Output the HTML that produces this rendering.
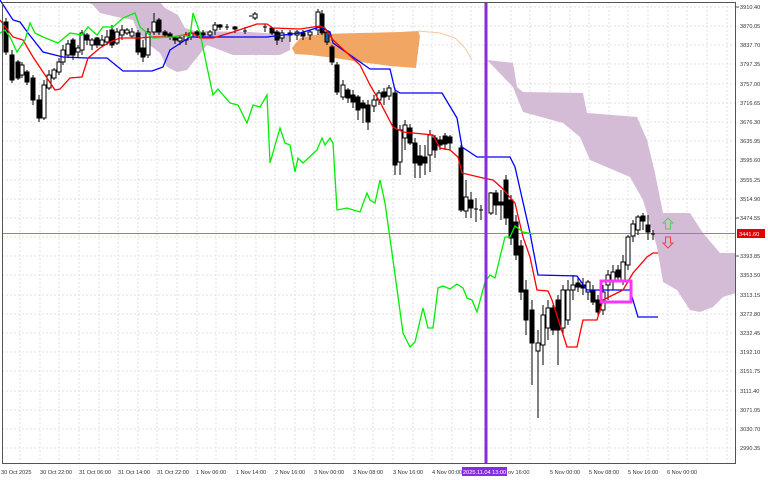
<!DOCTYPE html>
<html><head><meta charset="utf-8"><style>
html,body{margin:0;padding:0;background:#fff;width:768px;height:480px;overflow:hidden}
svg{display:block}
text{font-family:"Liberation Sans",sans-serif;font-size:5.6px;fill:#333}
</style></head><body>
<svg width="768" height="480" viewBox="0 0 768 480" xmlns="http://www.w3.org/2000/svg">
<rect width="768" height="480" fill="#fff"/>
<!-- grid -->
<g stroke="#e2e2e2" stroke-width="1" stroke-dasharray="2,2">
<line x1="2" x2="736" y1="7" y2="7"/><line x1="2" x2="736" y1="26" y2="26"/><line x1="2" x2="736" y1="45" y2="45"/><line x1="2" x2="736" y1="64" y2="64"/><line x1="2" x2="736" y1="84" y2="84"/><line x1="2" x2="736" y1="103" y2="103"/><line x1="2" x2="736" y1="122" y2="122"/><line x1="2" x2="736" y1="141" y2="141"/><line x1="2" x2="736" y1="160" y2="160"/><line x1="2" x2="736" y1="180" y2="180"/><line x1="2" x2="736" y1="199" y2="199"/><line x1="2" x2="736" y1="218" y2="218"/><line x1="2" x2="736" y1="237" y2="237"/><line x1="2" x2="736" y1="256" y2="256"/><line x1="2" x2="736" y1="275" y2="275"/><line x1="2" x2="736" y1="295" y2="295"/><line x1="2" x2="736" y1="314" y2="314"/><line x1="2" x2="736" y1="333" y2="333"/><line x1="2" x2="736" y1="352" y2="352"/><line x1="2" x2="736" y1="371" y2="371"/><line x1="2" x2="736" y1="391" y2="391"/><line x1="2" x2="736" y1="410" y2="410"/><line x1="2" x2="736" y1="429" y2="429"/><line x1="2" x2="736" y1="448" y2="448"/>
<line y1="2" y2="463" x1="20" x2="20"/><line y1="2" y2="463" x1="40" x2="40"/><line y1="2" y2="463" x1="59" x2="59"/><line y1="2" y2="463" x1="79" x2="79"/><line y1="2" y2="463" x1="99" x2="99"/><line y1="2" y2="463" x1="118" x2="118"/><line y1="2" y2="463" x1="138" x2="138"/><line y1="2" y2="463" x1="157" x2="157"/><line y1="2" y2="463" x1="177" x2="177"/><line y1="2" y2="463" x1="197" x2="197"/><line y1="2" y2="463" x1="216" x2="216"/><line y1="2" y2="463" x1="236" x2="236"/><line y1="2" y2="463" x1="256" x2="256"/><line y1="2" y2="463" x1="275" x2="275"/><line y1="2" y2="463" x1="295" x2="295"/><line y1="2" y2="463" x1="314" x2="314"/><line y1="2" y2="463" x1="334" x2="334"/><line y1="2" y2="463" x1="354" x2="354"/><line y1="2" y2="463" x1="373" x2="373"/><line y1="2" y2="463" x1="393" x2="393"/><line y1="2" y2="463" x1="413" x2="413"/><line y1="2" y2="463" x1="432" x2="432"/><line y1="2" y2="463" x1="452" x2="452"/><line y1="2" y2="463" x1="471" x2="471"/><line y1="2" y2="463" x1="511" x2="511"/><line y1="2" y2="463" x1="530" x2="530"/><line y1="2" y2="463" x1="550" x2="550"/><line y1="2" y2="463" x1="570" x2="570"/><line y1="2" y2="463" x1="589" x2="589"/><line y1="2" y2="463" x1="609" x2="609"/><line y1="2" y2="463" x1="628" x2="628"/><line y1="2" y2="463" x1="648" x2="648"/><line y1="2" y2="463" x1="668" x2="668"/><line y1="2" y2="463" x1="687" x2="687"/><line y1="2" y2="463" x1="707" x2="707"/><line y1="2" y2="463" x1="727" x2="727"/>
</g>
<!-- clouds -->
<polygon fill="#d5bcd6" points="87,2 160,2 165,8 178,15 185,28 195,31 250,32 290,35 290,50 280,55 233,55 207,45 187,70 177,72 167,67 160,53 147,43 137,30 133,20 117,17 100,13 93,5"/>
<polygon fill="#f2a664" points="292,48 300,38 320,34 360,33 400,32 418,31 420,36 416,68 390,66 360,62 335,58 310,55 295,54"/>
<polyline fill="none" stroke="#f6c89e" stroke-width="1" points="418,31 440,33 455,38 465,48 472,60"/>
<polygon fill="#d5bcd6" points="487,60 513,63 517,87 523,92 583,93 587,113 637,117 647,140 655,173 663,213 690,213 703,233 720,253 736,253 736,293 723,297 713,307 700,312 690,310 677,290 663,282 657,247 643,200 630,177 590,160 580,137 563,123 523,112 513,87 490,63"/>
<!-- price line -->
<line x1="2" x2="736" y1="233.5" y2="233.5" stroke="#d66" stroke-width="1"/>
<!-- candles -->
<g stroke="#000" stroke-width="1">
<line x1="6" x2="6" y1="18" y2="55"/><rect x="4" y="22" width="4" height="30" fill="#000"/>
<line x1="12" x2="12" y1="50" y2="83"/><rect x="10" y="55" width="4" height="25" fill="#000"/>
<line x1="18" x2="18" y1="60" y2="80"/><rect x="16" y="62" width="4" height="16" fill="#000"/>
<line x1="22" x2="22" y1="62" y2="78"/><rect x="20" y="65" width="4" height="10" fill="#fff"/>
<line x1="27" x2="27" y1="70" y2="85"/><rect x="25" y="72" width="4" height="10" fill="#000"/>
<line x1="33" x2="33" y1="75" y2="105"/><rect x="31" y="78" width="4" height="22" fill="#000"/>
<line x1="39" x2="39" y1="95" y2="122"/><rect x="37" y="100" width="4" height="18" fill="#000"/>
<line x1="44" x2="44" y1="80" y2="120"/><rect x="42" y="85" width="4" height="33" fill="#fff"/>
<line x1="49" x2="49" y1="70" y2="90"/><rect x="47" y="75" width="4" height="13" fill="#fff"/>
<line x1="54" x2="54" y1="68" y2="80"/><rect x="52" y="70" width="4" height="8" fill="#fff"/>
<line x1="59" x2="59" y1="58" y2="75"/><rect x="57" y="62" width="4" height="10" fill="#fff"/>
<line x1="63" x2="63" y1="45" y2="65"/><rect x="61" y="50" width="4" height="12" fill="#fff"/>
<line x1="68" x2="68" y1="40" y2="58"/><rect x="66" y="44" width="4" height="11" fill="#fff"/>
<line x1="73" x2="73" y1="38" y2="60"/><rect x="71" y="40" width="4" height="15" fill="#000"/>
<line x1="78" x2="78" y1="45" y2="58"/><rect x="76" y="48" width="4" height="4" fill="#fff"/>
<line x1="82" x2="82" y1="30" y2="55"/><rect x="80" y="33" width="4" height="17" fill="#fff"/>
<line x1="87" x2="87" y1="33" y2="45"/><rect x="85" y="35" width="4" height="5" fill="#000"/>
<line x1="92" x2="92" y1="38" y2="50"/><rect x="90" y="40" width="4" height="5" fill="#fff"/>
<line x1="97" x2="97" y1="37" y2="48"/><rect x="95" y="38" width="4" height="7" fill="#000"/>
<line x1="102" x2="102" y1="35" y2="47"/><rect x="100" y="40" width="4" height="5" fill="#fff"/>
<line x1="107" x2="107" y1="30" y2="45"/><rect x="105" y="37" width="4" height="5" fill="#fff"/>
<line x1="112" x2="112" y1="25" y2="48"/><rect x="110" y="30" width="4" height="15" fill="#000"/>
<line x1="117" x2="117" y1="28" y2="45"/><rect x="115" y="32" width="4" height="11" fill="#fff"/>
<line x1="122" x2="122" y1="25" y2="40"/><rect x="120" y="30" width="4" height="5" fill="#fff"/>
<line x1="127" x2="127" y1="28" y2="35"/><rect x="125" y="30" width="4" height="3" fill="#fff"/>
<line x1="132" x2="132" y1="28" y2="38"/><rect x="130" y="32" width="4" height="4" fill="#fff"/>
<line x1="138" x2="138" y1="30" y2="55"/><rect x="136" y="33" width="4" height="19" fill="#000"/>
<line x1="143" x2="143" y1="40" y2="62"/><rect x="141" y="48" width="4" height="9" fill="#000"/>
<line x1="148" x2="148" y1="28" y2="58"/><rect x="146" y="32" width="4" height="23" fill="#fff"/>
<line x1="154" x2="154" y1="13" y2="35"/><rect x="152" y="22" width="4" height="10" fill="#fff"/>
<line x1="159" x2="159" y1="18" y2="35"/><rect x="157" y="20" width="4" height="12" fill="#000"/>
<line x1="165" x2="165" y1="30" y2="38"/><rect x="163" y="32" width="4" height="3" fill="#000"/>
<line x1="170" x2="170" y1="32" y2="40"/><rect x="168" y="34" width="4" height="2" fill="#000"/>
<line x1="175" x2="175" y1="36" y2="44"/><rect x="173" y="38" width="4" height="2" fill="#000"/>
<line x1="180" x2="180" y1="35" y2="45"/><rect x="178" y="38" width="4" height="3" fill="#fff"/>
<line x1="186" x2="186" y1="32" y2="45"/><rect x="184" y="36" width="4" height="4" fill="#fff"/>
<line x1="191" x2="191" y1="30" y2="40"/><rect x="189" y="33" width="4" height="4" fill="#fff"/>
<line x1="197" x2="197" y1="30" y2="38"/><rect x="195" y="32" width="4" height="3" fill="#000"/>
<line x1="203" x2="203" y1="30" y2="38"/><rect x="201" y="33" width="4" height="2" fill="#000"/>
<line x1="210" x2="210" y1="30" y2="38"/><rect x="208" y="32" width="4" height="3" fill="#fff"/>
<line x1="215" x2="215" y1="22" y2="35"/><rect x="213" y="25" width="4" height="5" fill="#fff"/>
<line x1="220" x2="220" y1="24" y2="30"/><rect x="218" y="25" width="4" height="2" fill="#000"/>
<line x1="227" x2="227" y1="24" y2="30"/><line x1="225" x2="229" y1="27" y2="27"/>
<line x1="235" x2="235" y1="26" y2="33"/><rect x="233" y="27" width="4" height="2" fill="#000"/>
<line x1="245" x2="245" y1="27" y2="34"/><line x1="243" x2="247" y1="31" y2="31"/>
<line x1="255" x2="255" y1="12" y2="20"/><rect x="253" y="14" width="4" height="4" fill="#fff"/><line x1="249" x2="252" y1="16" y2="16"/>
<line x1="265" x2="265" y1="24" y2="32"/><line x1="263" x2="267" y1="27" y2="27"/>
<line x1="272" x2="272" y1="27" y2="35"/><rect x="270" y="28" width="4" height="5" fill="#000"/>
<line x1="277" x2="277" y1="30" y2="45"/><rect x="275" y="32" width="4" height="8" fill="#000"/>
<line x1="282" x2="282" y1="30" y2="42"/><rect x="280" y="33" width="4" height="5" fill="#fff"/>
<line x1="290" x2="290" y1="30" y2="42"/><rect x="288" y="33" width="4" height="2" fill="#000"/>
<line x1="297" x2="297" y1="30" y2="40"/><rect x="295" y="32" width="4" height="3" fill="#fff"/>
<line x1="303" x2="303" y1="30" y2="40"/><rect x="301" y="33" width="4" height="3" fill="#000"/>
<line x1="310" x2="310" y1="30" y2="40"/><rect x="308" y="32" width="4" height="3" fill="#fff"/>
<line x1="318" x2="318" y1="9" y2="35"/><rect x="316" y="12" width="4" height="18" fill="#fff"/>
<line x1="322" x2="322" y1="10" y2="35"/><rect x="320" y="14" width="4" height="19" fill="#000"/>
<line x1="327" x2="327" y1="30" y2="45"/><rect x="325" y="32" width="4" height="10" fill="#1a5a9a"/>
<line x1="332" x2="332" y1="45" y2="65"/><rect x="330" y="47" width="4" height="15" fill="#000"/>
<line x1="337" x2="337" y1="62" y2="95"/><rect x="335" y="65" width="4" height="27" fill="#000"/>
<line x1="343" x2="343" y1="80" y2="100"/><rect x="341" y="85" width="4" height="12" fill="#fff"/>
<line x1="348" x2="348" y1="88" y2="103"/><rect x="346" y="90" width="4" height="8" fill="#000"/>
<line x1="353" x2="353" y1="90" y2="108"/><rect x="351" y="95" width="4" height="7" fill="#000"/>
<line x1="358" x2="358" y1="95" y2="120"/><rect x="356" y="97" width="4" height="13" fill="#000"/>
<line x1="363" x2="363" y1="100" y2="123"/><rect x="361" y="103" width="4" height="5" fill="#000"/>
<line x1="368" x2="368" y1="100" y2="130"/><rect x="366" y="105" width="4" height="17" fill="#000"/>
<line x1="374" x2="374" y1="95" y2="112"/><rect x="372" y="100" width="4" height="6" fill="#fff"/>
<line x1="379" x2="379" y1="90" y2="105"/><rect x="377" y="93" width="4" height="7" fill="#fff"/>
<line x1="384" x2="384" y1="88" y2="105"/><rect x="382" y="92" width="4" height="5" fill="#000"/>
<line x1="389" x2="389" y1="85" y2="100"/><rect x="387" y="88" width="4" height="8" fill="#fff"/>
<line x1="395" x2="395" y1="88" y2="175"/><rect x="393" y="93" width="4" height="72" fill="#000"/>
<line x1="400" x2="400" y1="125" y2="175"/><rect x="398" y="130" width="4" height="32" fill="#fff"/>
<line x1="405" x2="405" y1="120" y2="150"/><rect x="403" y="125" width="4" height="13" fill="#fff"/>
<line x1="410" x2="410" y1="124" y2="145"/><rect x="408" y="128" width="4" height="15" fill="#000"/>
<line x1="415" x2="415" y1="138" y2="178"/><rect x="413" y="143" width="4" height="20" fill="#000"/>
<line x1="420" x2="420" y1="145" y2="178"/><rect x="418" y="156" width="4" height="9" fill="#000"/>
<line x1="425" x2="425" y1="145" y2="175"/><rect x="423" y="157" width="4" height="6" fill="#000"/>
<line x1="430" x2="430" y1="130" y2="172"/><rect x="428" y="135" width="4" height="20" fill="#fff"/>
<line x1="435" x2="435" y1="135" y2="158"/><rect x="433" y="138" width="4" height="12" fill="#000"/>
<line x1="440" x2="440" y1="136" y2="150"/><rect x="438" y="140" width="4" height="5" fill="#000"/>
<line x1="445" x2="445" y1="133" y2="150"/><rect x="443" y="136" width="4" height="8" fill="#000"/>
<line x1="450" x2="450" y1="135" y2="150"/><rect x="448" y="137" width="4" height="6" fill="#000"/>
<line x1="461" x2="461" y1="145" y2="212"/><rect x="459" y="148" width="4" height="62" fill="#000"/>
<line x1="466" x2="466" y1="180" y2="218"/><rect x="464" y="197" width="4" height="14" fill="#fff"/>
<line x1="471" x2="471" y1="192" y2="218"/><rect x="469" y="200" width="4" height="8" fill="#000"/>
<line x1="476" x2="476" y1="198" y2="222"/><line x1="474" x2="478" y1="209" y2="209"/>
<line x1="481" x2="481" y1="205" y2="220"/><line x1="479" x2="483" y1="210" y2="210"/>
<line x1="491" x2="491" y1="192" y2="215"/><rect x="489" y="193" width="4" height="20" fill="#fff"/>
<line x1="496" x2="496" y1="190" y2="215"/><rect x="494" y="193" width="4" height="12" fill="#000"/>
<line x1="501" x2="501" y1="190" y2="220"/><rect x="499" y="202" width="4" height="3" fill="#000"/>
<line x1="506" x2="506" y1="175" y2="225"/><rect x="504" y="180" width="4" height="38" fill="#000"/>
<line x1="511" x2="511" y1="195" y2="245"/><rect x="509" y="200" width="4" height="38" fill="#000"/>
<line x1="516" x2="516" y1="215" y2="260"/><rect x="514" y="222" width="4" height="33" fill="#000"/>
<line x1="521" x2="521" y1="240" y2="300"/><rect x="519" y="246" width="4" height="46" fill="#000"/>
<line x1="526" x2="526" y1="280" y2="335"/><rect x="524" y="290" width="4" height="30" fill="#000"/>
<line x1="532" x2="532" y1="300" y2="385"/><rect x="530" y="310" width="4" height="33" fill="#000"/>
<line x1="538" x2="538" y1="330" y2="418"/><rect x="536" y="343" width="4" height="8" fill="#fff"/>
<line x1="543" x2="543" y1="305" y2="365"/><rect x="541" y="315" width="4" height="30" fill="#fff"/>
<line x1="548" x2="548" y1="300" y2="340"/><rect x="546" y="308" width="4" height="20" fill="#fff"/>
<line x1="553" x2="553" y1="305" y2="335"/><rect x="551" y="308" width="4" height="22" fill="#000"/>
<line x1="558" x2="558" y1="295" y2="365"/><rect x="556" y="300" width="4" height="30" fill="#000"/>
<line x1="563" x2="563" y1="285" y2="335"/><rect x="561" y="290" width="4" height="38" fill="#fff"/>
<line x1="568" x2="568" y1="280" y2="325"/><rect x="566" y="290" width="4" height="30" fill="#fff"/>
<line x1="573" x2="573" y1="275" y2="300"/><rect x="571" y="285" width="4" height="5" fill="#fff"/>
<line x1="578" x2="578" y1="278" y2="292"/><rect x="576" y="283" width="4" height="4" fill="#000"/>
<line x1="583" x2="583" y1="278" y2="295"/><rect x="581" y="285" width="4" height="3" fill="#000"/>
<line x1="588" x2="588" y1="280" y2="300"/><rect x="586" y="282" width="4" height="10" fill="#fff"/>
<line x1="593" x2="593" y1="285" y2="305"/><rect x="591" y="290" width="4" height="12" fill="#000"/>
<line x1="598" x2="598" y1="295" y2="315"/><rect x="596" y="300" width="4" height="12" fill="#000"/>
<line x1="603" x2="603" y1="285" y2="315"/><rect x="601" y="292" width="4" height="18" fill="#fff"/>
<line x1="608" x2="608" y1="270" y2="300"/><rect x="606" y="275" width="4" height="10" fill="#fff"/>
<line x1="613" x2="613" y1="265" y2="290"/><rect x="611" y="272" width="4" height="8" fill="#fff"/>
<line x1="618" x2="618" y1="265" y2="282"/><rect x="616" y="270" width="4" height="7" fill="#000"/>
<line x1="623" x2="623" y1="255" y2="285"/><rect x="621" y="262" width="4" height="18" fill="#fff"/>
<line x1="628" x2="628" y1="235" y2="270"/><rect x="626" y="237" width="4" height="28" fill="#fff"/>
<line x1="633" x2="633" y1="220" y2="242"/><rect x="631" y="224" width="4" height="12" fill="#fff"/>
<line x1="638" x2="638" y1="215" y2="235"/><rect x="636" y="217" width="4" height="13" fill="#fff"/>
<line x1="643" x2="643" y1="213" y2="230"/><rect x="641" y="216" width="4" height="5" fill="#000"/>
<line x1="648" x2="648" y1="215" y2="240"/><rect x="646" y="225" width="4" height="7" fill="#000"/>
<line x1="653" x2="653" y1="230" y2="240"/><line x1="651" x2="655" y1="234" y2="234"/>
</g>
<!-- lines -->
<polyline fill="none" stroke="#0000ff" stroke-width="1.3" points="0,0 13,20 20,22 28,33 43,52 63,57 87,58 107,58 123,71 152,71 163,67 170,50 190,37 267,37 300,33 320,27 330,32 333,43 370,69 390,69 395,90 400,93 442,93 457,118 462,147 477,157 510,157 515,167 530,233 538,275 577,276 587,290 630,290 638,317 658,317"/>
<polyline fill="none" stroke="#ff0000" stroke-width="1.3" points="0,20 13,37 23,40 33,57 43,72 55,90 60,89 70,78 82,77 88,58 100,48 110,42 120,38 140,38 150,37 173,37 193,33 200,38 213,38 233,32 257,24 267,24 273,28 300,29 320,26 325,28 333,40 360,65 370,85 380,102 393,127 403,132 433,135 440,148 450,150 458,157 462,173 483,178 493,180 502,188 508,195 515,203 523,237 530,257 537,290 548,291 552,300 567,347 577,347 583,320 597,320 603,300 623,290 633,273 647,257 653,253 658,253"/>
<polyline fill="none" stroke="#00ee00" stroke-width="1.3" points="0,33 5,30 10,37 17,52 25,40 30,23 35,33 43,37 58,43 70,33 82,35 88,27 97,35 103,27 113,27 123,18 135,13 140,27 153,38 173,37 183,35 190,37 193,13 200,33 207,67 213,95 218,89 230,103 238,105 247,123 253,105 260,107 267,95 270,163 280,128 285,143 290,145 295,172 298,158 303,163 317,150 322,138 325,145 330,138 333,143 337,210 347,208 360,212 367,193 370,200 375,203 380,180 385,203 393,260 403,333 410,347 415,342 423,308 428,328 433,328 438,288 443,286 450,289 457,284 463,288 467,298 472,300 477,312 485,282 490,275 495,278 500,257 505,237 510,237 515,226 523,232 533,234"/>
<!-- vertical purple line -->
<rect x="484.5" y="2" width="3" height="461" fill="#8a2be2"/>
<!-- magenta box -->
<rect x="601" y="281" width="30" height="21" fill="none" stroke="#ff33ff" stroke-width="3"/>
<!-- arrows -->
<path d="M668,218 L673,223 L670.5,223 L670.5,229 L665.5,229 L665.5,223 L663,223 Z" fill="none" stroke="#5c5" stroke-width="1"/>
<path d="M668,248 L673,243 L670.5,243 L670.5,237 L665.5,237 L665.5,243 L663,243 Z" fill="none" stroke="#e44" stroke-width="1"/>
<!-- frame -->
<rect x="2.5" y="2.5" width="733" height="461" fill="none" stroke="#555" stroke-width="1"/>
<!-- y labels -->
<g>
<text x="740" y="9">3910.40</text><text x="740" y="28">3870.05</text><text x="740" y="47">3837.70</text><text x="740" y="66">3797.35</text><text x="740" y="86">3757.00</text><text x="740" y="105">3716.65</text><text x="740" y="124">3676.30</text><text x="740" y="143">3635.95</text><text x="740" y="162">3595.60</text><text x="740" y="182">3555.25</text><text x="740" y="201">3514.90</text><text x="740" y="220">3474.55</text><text x="740" y="258">3393.85</text><text x="740" y="277">3353.50</text><text x="740" y="297">3313.15</text><text x="740" y="316">3272.80</text><text x="740" y="335">3232.45</text><text x="740" y="354">3192.10</text><text x="740" y="373">3151.75</text><text x="740" y="393">3111.40</text><text x="740" y="412">3071.05</text><text x="740" y="431">3030.70</text><text x="740" y="450">2990.35</text>
</g>
<g stroke="#555"><line x1="736" x2="739" y1="7" y2="7"/><line x1="736" x2="739" y1="218" y2="218"/><line x1="736" x2="739" y1="256" y2="256"/></g>
<rect x="737" y="229" width="28" height="9" fill="#e00000"/>
<text x="739" y="236" style="fill:#fff">3441.60</text>
<!-- x labels -->
<g>
<text x="1" y="474">30 Oct 2025</text><text x="40" y="474">30 Oct 22:00</text><text x="79" y="474">31 Oct 06:00</text><text x="118" y="474">31 Oct 14:00</text><text x="157" y="474">31 Oct 22:00</text><text x="196" y="474">1 Nov 06:00</text><text x="236" y="474">1 Nov 14:00</text><text x="275" y="474">2 Nov 16:00</text><text x="314" y="474">3 Nov 00:00</text><text x="353" y="474">3 Nov 08:00</text><text x="393" y="474">3 Nov 16:00</text><text x="432" y="474">4 Nov 00:00</text><text x="508" y="474">ov 16:00</text><text x="550" y="474">5 Nov 00:00</text><text x="589" y="474">5 Nov 08:00</text><text x="628" y="474">5 Nov 16:00</text><text x="667" y="474">6 Nov 00:00</text>
</g>
<rect x="462" y="467" width="45" height="9" fill="#8a2be2"/>
<text x="463" y="474" style="fill:#fff">2025.11.04 13:00</text>
</svg>
</body></html>
